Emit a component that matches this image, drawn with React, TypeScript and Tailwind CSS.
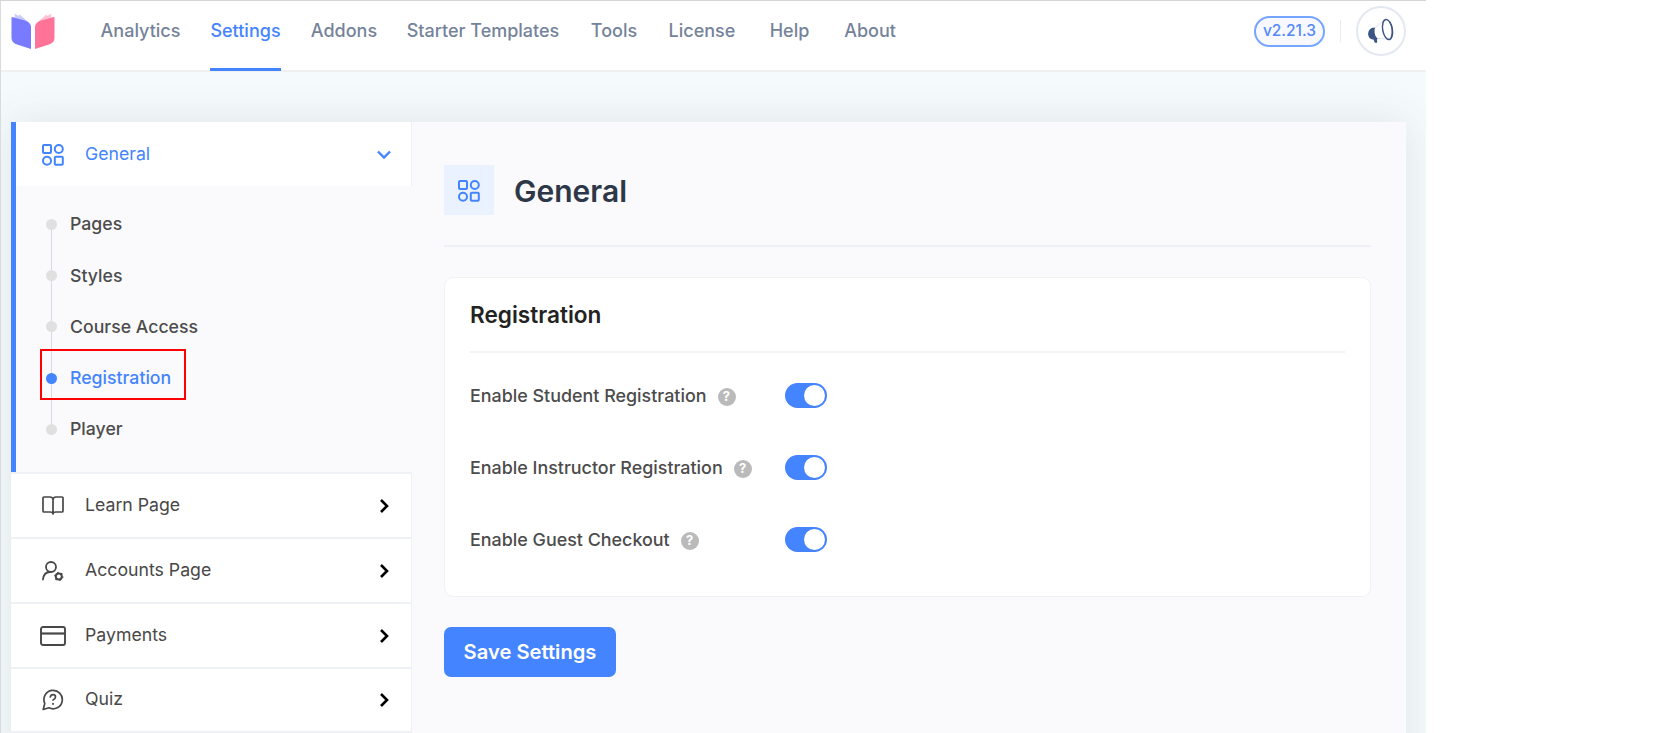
import React from "react";

const nav = [
  { label: "Analytics", cls: "ml-[46px] w-[79px]" },
  { label: "Settings", cls: "ml-[30px] w-[71px]", active: true },
  { label: "Addons", cls: "ml-[30px] w-[66px]" },
  { label: "Starter Templates", cls: "ml-[30px] w-[152px]" },
  { label: "Tools", cls: "ml-[32px] w-[46px]" },
  { label: "License", cls: "ml-[32px] w-[66px]" },
  { label: "Help", cls: "ml-[35px] w-[39px]" },
  { label: "About", cls: "ml-[35px] w-[52px]" },
];

function GridIcon() {
  return (
    <svg width="22" height="22" viewBox="0 0 22 22" fill="none" stroke="currentColor" strokeWidth="2">
      <rect x="1" y="1" width="8" height="8" rx="1" />
      <circle cx="16.8" cy="5" r="4" />
      <circle cx="5" cy="16.8" r="4" />
      <rect x="12.8" y="12.8" width="8" height="8" rx="1" />
    </svg>
  );
}

function Logo() {
  return (
    <svg width="44" height="36" viewBox="0 0 44 36">
      <path d="M3.500 0.500 L7.500 3 L8.500 1.500 L15 7 L19 11 L0.500 5 L4 4 Z" fill="#c9caff" />
      <path d="M40.500 0.500 L36.500 3 L35.500 1.500 L29 7 L25 11 L43.500 5 L40 4 Z" fill="#ffc4d3" />
      <path d="M0.500 4 L14 7.500 Q20 9.500 20 14 V36 L6 31.500 Q0.500 29.500 0.500 25 Z" fill="#787bff" />
      <path d="M43.500 4 L30 7.500 Q24 9.500 24 14 V36 L38 31.500 Q43.500 29.500 43.500 25 Z" fill="#ff7399" />
    </svg>
  );
}

function Megaphone() {
  return (
    <svg width="28" height="26" viewBox="0 0 28 26" fill="none">
      <path d="M8 10 L17 2 M10 20.500 L22 21" stroke="#e0e5ee" strokeWidth="1" />
      <ellipse cx="20.500" cy="11.500" rx="4.800" ry="10.200" transform="rotate(-10 20.500 11.500)" stroke="#3f5680" strokeWidth="1.500" />
      <path d="M23 4 C25.500 9 26 15 24 20" stroke="#3f5680" strokeWidth="1.200" />
      <path d="M8 9.500 C3 9.500 0.800 13 1.200 17 C1.700 20 4 21.500 6.500 21.500 L7.800 24.800 H10.200 L10 21.500 C11 21 10.500 20 9.500 19.500 C7.500 17 7 13 8 9.500 Z" fill="#3b5585" />
    </svg>
  );
}

function BookIcon() {
  return (
    <svg width="22" height="20" viewBox="0 0 22 20" fill="none" stroke="currentColor" strokeWidth="1.700" strokeLinejoin="round" strokeLinecap="round">
      <path d="M11 4 Q11 1 8 1 H2 Q1 1 1 2 V15 Q1 16 2 16 H8 Q11 16 11 18 Q11 16 14 16 H20 Q21 16 21 15 V2 Q21 1 20 1 H14 Q11 1 11 4 V18" />
    </svg>
  );
}

function AccountIcon() {
  return (
    <svg width="22" height="20" viewBox="0 0 22 20" fill="none" stroke="currentColor" strokeWidth="1.800" strokeLinecap="round">
      <circle cx="9" cy="6" r="5" />
      <path d="M1 18.500 C1.500 13.500 4 11 8 11" />
      <circle cx="16.800" cy="15.500" r="3" strokeWidth="2" />
      <circle cx="16.800" cy="15.500" r="4" strokeWidth="1.300" strokeDasharray="1.400 2.788" strokeLinecap="butt" />
    </svg>
  );
}

function CardIcon() {
  return (
    <svg width="26" height="20" viewBox="0 0 26 20" fill="none" stroke="currentColor" strokeWidth="1.900">
      <rect x="1" y="1" width="24" height="18" rx="2" />
      <path d="M1 7.500 H25" strokeWidth="2.200" />
    </svg>
  );
}

function QuizIcon() {
  return (
    <svg width="22" height="22" viewBox="0 0 22 22" fill="none" stroke="currentColor" strokeWidth="1.700" strokeLinecap="round" strokeLinejoin="round">
      <path d="M2.800 14.500 A9.200 9.200 0 1 1 7 18.800 L1.200 20.500 Z" />
      <path d="M8.300 8 Q8.800 5.700 11 5.700 Q13.500 5.700 13.500 8 Q13.500 9.800 11 11" />
      <path d="M11 14.800 V15" strokeWidth="1.900" />
    </svg>
  );
}

const subItems = ["Pages", "Styles", "Course Access", "Registration", "Player"];
const sections = [
  { label: "Learn Page", icon: <BookIcon />, height: "h-[65px]" },
  { label: "Accounts Page", icon: <AccountIcon />, height: "h-[65px]" },
  { label: "Payments", icon: <CardIcon />, height: "h-[65px]" },
  { label: "Quiz", icon: <QuizIcon />, height: "h-[64px]" },
];
const options = ["Enable Student Registration", "Enable Instructor Registration", "Enable Guest Checkout"];

function Header() {
  return (
    <header className="flex h-[71px] shrink-0 items-start border-b-2 border-[#f0f0f1] bg-white pl-[10px]">
      <div className="mt-[12px]">
        <Logo />
      </div>
      <nav className="flex h-[70px] text-[18px] font-medium text-[#75839a]">
        {nav.map((n) => (
          <a
            key={n.label}
            className={`${n.cls} flex h-[70px] items-start justify-center border-b-[3px] pt-[16px] leading-[28px] whitespace-nowrap ${n.active ? "border-[#4484ff] text-[#4484ff]" : "border-transparent"}`}
          >
            {n.label}
          </a>
        ))}
      </nav>
      <div className="ml-auto flex items-center pt-[5px] pr-[20px]">
        <span className="flex h-[31px] w-[71px] items-center justify-center rounded-full border-2 border-[#76a5ff] bg-[#f8f9ff] text-[15.500px] font-medium text-[#5389fb]">
          v2.21.3
        </span>
        <span className="ml-[15px] h-[22px] w-px bg-[#e8edf4]" />
        <span className="ml-[15px] flex size-[50px] items-center justify-center rounded-full border-2 border-[#e3e8f1]">
          <Megaphone />
        </span>
      </div>
    </header>
  );
}

function Sidebar() {
  return (
    <aside className="w-[401px] shrink-0">
      <div className="h-[350px] border-l-[5px] border-[#4484ff]">
        <div className="flex h-[64px] items-center border-r border-[#eef2f6] bg-white pt-px pr-[20px] pl-[26px] text-[#4484ff]">
          <GridIcon />
          <span className="ml-[21px] text-[17.700px]">General</span>
          <svg className="ml-auto" width="14" height="10" viewBox="0 0 14 10" fill="none" stroke="currentColor" strokeWidth="2.400">
            <path d="M1 1.500 L7 7.500 L13 1.500" />
          </svg>
        </div>
        <ul className="relative pt-[13px] pl-[30px]">
          <li className="absolute top-[39px] left-[35px] h-[205px] w-px bg-[#d5dbe5]" />
          {subItems.map((s) => (
            <li key={s} className="relative flex h-[51.200px] items-center text-[17.700px] font-medium text-[#4c4c4c]">
              <span className={`size-[11px] rounded-full ${s === "Registration" ? "bg-[#4484ff]" : "bg-[#e0e0e0]"}`} />
              <span className={`ml-[13px] ${s === "Registration" ? "text-[#4484ff]" : ""}`}>{s}</span>
              {s === "Registration" && (
                <span className="absolute top-[-4px] left-[-6px] h-[51px] w-[146px] border-2 border-[#ff0000]" />
              )}
            </li>
          ))}
        </ul>
      </div>
      {sections.map((s) => (
        <div key={s.label} className={`${s.height} flex items-center border-t-2 border-r border-[#eef2f7] bg-white pr-[22px] text-[#484848]`}>
          <span className="ml-[28px] flex w-[27px] justify-center">{s.icon}</span>
          <span className="ml-[19px] pb-px text-[17.700px]">{s.label}</span>
          <svg className="ml-auto" width="10" height="14" viewBox="0 0 10 14" fill="none" stroke="#000" strokeWidth="2.600">
            <path d="M2 1 L8 7 L2 13" />
          </svg>
        </div>
      ))}
      <div className="h-[65px] border-t-2 border-[#eef2f7] bg-white" />
    </aside>
  );
}

export default function App() {
  return (
    <div className="h-[733px] w-full overflow-hidden bg-white font-['Inter',sans-serif]">
      <div className="flex h-full w-[1426px] flex-col overflow-hidden border-t border-l border-t-[#d5d5d5] border-l-[#d8dcdf] bg-[#f5fafd]">
        <Header />
        <div className="min-h-0 flex-1 overflow-hidden pt-[50px] pr-[20px] pl-[10px]">
          <div className="flex h-[800px] bg-[#fafafc] shadow-[0_0_40px_rgba(75,85,75,0.12)]">
            <Sidebar />
            <main className="flex-1 pt-[43px] pr-[35px] pl-[32px]">
              <div className="flex items-center border-b-2 border-[#edf1f7] pb-[30px]">
                <span className="flex size-[50px] items-center justify-center bg-[#ebf2ff] pt-px text-[#4484ff]">
                  <GridIcon />
                </span>
                <h1 className="ml-[20px] pt-[2px] text-[30px] font-semibold text-[#2d3748]">General</h1>
              </div>
              <section className="mt-[30px] h-[320px] rounded-[9px] border border-[#f0f1f6] bg-white px-[25px]">
                <h2 className="h-[75px] border-b-2 border-[#f2f3f5] pt-[19px] text-[22.600px] leading-[36px] font-semibold text-[#232323]">
                  Registration
                </h2>
                <div className="pt-[6px]">
                  {options.map((o) => (
                    <div key={o} className="flex h-[72px] items-center">
                      <div className="flex w-[315px] items-center pt-[2px]">
                        <span className="text-[17.900px] font-medium text-[#4c4c4c]">{o}</span>
                        <span className="mt-[2px] ml-[11px] flex size-[18px] items-center justify-center rounded-full bg-[#bababa] text-[13px] font-bold text-white">
                          ?
                        </span>
                      </div>
                      <span className="flex h-[25px] w-[42px] items-center justify-end rounded-full bg-[#4484ff] pr-[2px]">
                        <span className="size-[21px] rounded-full bg-white" />
                      </span>
                    </div>
                  ))}
                </div>
              </section>
              <button className="mt-[30px] h-[50px] w-[172px] rounded-[7px] bg-[#4484ff] pt-px text-[20.200px] font-semibold whitespace-nowrap text-white">
                Save Settings
              </button>
            </main>
          </div>
        </div>
      </div>
    </div>
  );
}
